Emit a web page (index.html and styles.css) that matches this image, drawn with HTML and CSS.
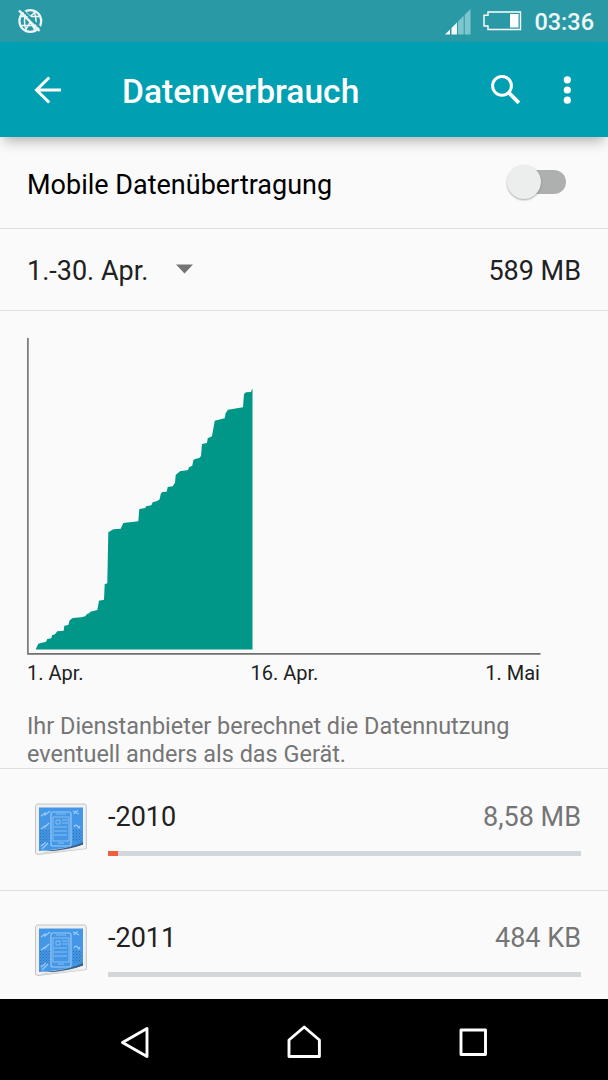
FILE: index.html
```html
<!DOCTYPE html>
<html lang="de">
<head>
    <meta charset="UTF-8">
    <meta name="viewport" content="width=device-width, initial-scale=1.0">
    <title>Datenverbrauch</title>
    <link rel="stylesheet" href="styles.css">
</head>
<body>

    <!-- Statusleiste -->
    <div class="status-bar">
        <svg class="globe-icon" width="26" height="26" viewBox="0 0 26 26" fill="none" stroke="#eef5f6">
            <circle cx="13.300" cy="13" r="10.900" stroke-width="2.200"/>
            <path d="M4 8.500h18M4 17.500h18M9.500 3Q5.500 13 9.500 23M17 3Q21 13 17 23M8.500 4L13.300 8.500L18 4M8.500 22L13.300 14L18 22" stroke-width="1.500"/>
            <path d="M5 1.500L25 21.500" stroke="#2a99a6" stroke-width="2"/>
            <path d="M2 2.500L22.500 23" stroke-width="2.400"/>
        </svg>
        <div class="status-right">
            <svg width="26" height="26" viewBox="0 0 26 26">
                <path d="M0 25.500L5 20.500V25.500z" fill="#f3f8f9"/>
                <path d="M6.500 19L12 13.500V25.500H6.500z" fill="#f3f8f9"/>
                <path d="M13 12.500L18.700 6.800V25.500H13z" fill="#7ec6cd"/>
                <path d="M19.700 5.800L25.500 0V25.500H19.700z" fill="#7ec6cd"/>
            </svg>
            <svg class="battery-icon" width="39" height="20" viewBox="0 0 39 20">
                <path d="M5 1H37.500V18.500H5V15H1V4.200H5z" fill="none" stroke="#fff" stroke-width="1.400"/>
                <path d="M27 3h8.500v13.500H27z" fill="#fff"/>
            </svg>
            <span class="clock">03:36</span>
        </div>
    </div>

    <!-- Titelleiste -->
    <div class="app-bar">
        <svg class="back-icon" width="28" height="28" viewBox="0 0 28 28" fill="none" stroke="#fff" stroke-width="3">
            <path d="M27 14H3M15.200 1.500L2.500 14L15.200 26.500"/>
        </svg>
        <h1>Datenverbrauch</h1>
        <svg class="search-icon" width="30" height="30" viewBox="0 0 30 30" fill="none" stroke="#fff">
            <circle cx="11" cy="10.800" r="9.400" stroke-width="3"/>
            <path d="M17.700 17.600L27.900 27.800" stroke-width="3.800"/>
        </svg>
        <svg width="8" height="28" viewBox="0 0 8 28" fill="#fff">
            <circle cx="4.300" cy="3.800" r="3.600"/>
            <circle cx="4.300" cy="14" r="3.600"/>
            <circle cx="4.300" cy="24.200" r="3.600"/>
        </svg>
    </div>

    <div class="content">
        <div class="row mobile-row">
            <span>Mobile Datenübertragung</span>
            <div class="switch"><div class="thumb"></div></div>
        </div>

        <div class="row cycle-row">
            <span>1.-30. Apr.</span>
            <svg class="caret" width="17" height="10" viewBox="0 0 17 10"><path d="M0 0.500H17L8.500 9.500z" fill="#747474"/></svg>
            <span class="total">589 MB</span>
        </div>

        <!-- Verbrauchsdiagramm -->
        <div class="chart">
            <svg width="514" height="318" viewBox="27 338 514 318">
                <path fill="#009688" d="M35.700 649.500L38.300 643.700L46 641.700L47.300 639L51.300 638.300L52 635.300L55 634.300L57.300 631.300L63.700 630.700L64.300 625.700L68.300 625L69.700 620.300L72.700 618L81.300 617.300L85.300 616.300L86.700 614.300L89.300 613.300L90.300 611.700L97.300 610L99 600.700L104 599.700L104.700 584.300L107.300 583.300L108.300 532.300L113.300 529.300L120.700 528.700L123.300 523L138.300 521.300L139.300 509L145.300 508L146 506.300L151.300 505.300L152.700 502.300L157.300 501L159.700 499.300L160.700 494L162.300 492L166.700 491.700L167.700 487L172.700 486.300L175 482.700L175.700 475L180 471.300L188 470L189 467.300L192.300 465.700L193.300 460.300L195 459L199.300 458L201 456L202 444L207 443L207.700 438.300L212 436.300L214.700 420.700L224.700 418.300L225.700 413L228 409.700L243 407.300L244 394L246 392.300L251 392L252 389H252.500V649.500z"/>
                <path d="M27.900 338V653.900H540.500" fill="none" stroke="#707070" stroke-width="1.600"/>
            </svg>
            <div class="chart-labels">
                <span>1. Apr.</span>
                <span>16. Apr.</span>
                <span>1. Mai</span>
            </div>
        </div>

        <p class="note">Ihr Dienstanbieter berechnet die Datennutzung<br>eventuell anders als das Gerät.</p>

        <!-- Apps -->
        <div class="app app-first">
            <svg class="app-icon" width="54" height="54" viewBox="0 0 54 54">
                <use href="#blueprint"/>
            </svg>
            <div class="app-info">
                <div class="app-text"><span>-2010</span><span class="size">8,58 MB</span></div>
                <div class="bar"><div class="bar-fill" style="width: 2.1%"></div></div>
            </div>
        </div>
        <div class="app">
            <svg class="app-icon" width="54" height="54" viewBox="0 0 54 54">
                <use href="#blueprint"/>
            </svg>
            <div class="app-info">
                <div class="app-text"><span>-2011</span><span class="size">484 KB</span></div>
                <div class="bar"></div>
            </div>
        </div>
    </div>

    <!-- Navigationsleiste -->
    <div class="nav-bar">
        <svg width="34" height="36" viewBox="0 0 34 36"><path d="M29 3.500V31.500L4.500 17.500z"/></svg>
        <svg width="34" height="36" viewBox="0 0 34 36"><path d="M2 31.500V15L17.200 2L32.400 15V31.500z"/></svg>
        <svg width="34" height="36" viewBox="0 0 34 36"><path d="M5 5H29.500V29.500H5z"/></svg>
    </div>

    <!-- Standard-App-Symbol -->
    <svg class="defs">
        <defs>
            <linearGradient id="curl" x1="0" y1="0" x2="0" y2="1">
                <stop offset="0" stop-color="#fff"/>
                <stop offset="1" stop-color="#d4d4d4"/>
            </linearGradient>
            <pattern id="dots" width="3" height="3" patternUnits="userSpaceOnUse">
                <path d="M0 0h1v1H0zM1.500 1.500h1v1h-1z" fill="#2b6fae"/>
            </pattern>
            <g id="blueprint">
                <path d="M3 1H51L52.300 2.500V45.500L4 51.500L1.500 50.500V2.500z" fill="#f0f0f0" stroke="#c4c4c4"/>
                <path d="M5 4.500H49V40Q38 45 5 48z" fill="#4397e6"/>
                <path d="M6 27h10v14H6zM39 27h9v12h-9z" fill="url(#dots)"/>
                <path d="M9 48Q34 46 49 39V42L30 48z" fill="#39658e"/>
                <path d="M11 48.500Q34 47.500 51.500 41V45.500L4 51.500z" fill="url(#curl)"/>
                <g fill="none" stroke="#9bc9f5">
                    <rect x="17" y="9" width="20" height="34" rx="2" stroke-width="1.200"/>
                    <path d="M19 14h16v24H19zM22 11h10M22 17h4v4h-4zM28 17h6M28 20h6M20 24h13M20 28h13M20 32h13M24 40h6" stroke-width=".8"/>
                    <path d="M7 13L11 10L11 12L16 8M7 26L11 23V24L15 20M8 46L14 40M7 43L12 39M39 8L45 11M40 11Q42 7 44 8M40 24Q42 20 45 25L46 23" stroke-width="1.300"/>
                </g>
            </g>
        </defs>
    </svg>

</body>
</html>
```
FILE: styles.css
```css
body {
    font-family: Roboto, "Liberation Sans", sans-serif;
    margin: 0;
    height: 1080px;
    background-color: #fafafa;
    color: #212121;
    font-size: 27px;
    display: flex;
    flex-direction: column;
    overflow: hidden;
}

svg {
    display: block;
    flex: none;
}

/* Statusleiste */
.status-bar {
    height: 42px;
    box-sizing: border-box;
    padding: 0 14px 0 17px;
    background-color: #2a99a6;
    display: flex;
    align-items: center;
    justify-content: space-between;
}

.status-right {
    display: flex;
    align-items: center;
    padding-top: 1px;
}

.battery-icon {
    margin: 0 12px 2px 12px;
}

.clock {
    color: #eef6f7;
    font-size: 23.5px;
    font-weight: 500;
    line-height: 38px;
}

/* Titelleiste */
.app-bar {
    position: relative;
    height: 95px;
    box-sizing: border-box;
    padding: 0 37px 0 34px;
    background-color: #009fb1;
    color: white;
    display: flex;
    align-items: center;
    box-shadow: 0 8px 12px -4px rgba(0, 0, 0, 0.3);
}

.app-bar h1 {
    flex: 1;
    margin: 5px 0 0 60px;
    font-size: 33.6px;
    font-weight: 500;
    line-height: 40px;
}

.search-icon {
    margin-right: 42px;
}

/* Inhalt */
.content {
    height: 862px;
    overflow: hidden;
}

.row {
    box-sizing: border-box;
    padding: 0 27px;
    display: flex;
    align-items: center;
    border-bottom: 1px solid #dfdfdf;
    white-space: nowrap;
}

.mobile-row {
    height: 92px;
    padding-top: 4px;
    padding-right: 42px;
    color: #000;
    justify-content: space-between;
}

.cycle-row {
    height: 82px;
    padding-top: 2px;
}

.caret {
    margin: 0 0 3px 28px;
}

.total {
    margin-left: auto;
}

/* Schalter */
.switch {
    width: 50px;
    height: 24px;
    margin-bottom: 5px;
    border-radius: 12px;
    background-color: #aeb0b0;
}

.thumb {
    width: 34px;
    height: 34px;
    margin: -5px 0 0 -9px;
    border-radius: 50%;
    background-color: #eceeee;
    box-shadow: 0 1px 2px rgba(60, 75, 85, 0.45);
}

/* Diagramm */
.chart {
    width: 514px;
    padding: 27px 0 0 27px;
}

.chart-labels {
    display: flex;
    justify-content: space-between;
    width: 513px;
    padding-top: 5px;
    font-size: 20px;
    line-height: 24px;
}

.note {
    height: 56px;
    margin: 0;
    padding: 27px 27px 0;
    border-bottom: 1px solid #dfdfdf;
    color: #757575;
    font-size: 23.45px;
    line-height: 28px;
}

/* App-Zeilen */
.app {
    height: 121px;
    box-sizing: border-box;
    padding: 0 27px 0 34px;
    display: flex;
}

.app-first {
    height: 122px;
    padding-top: 1px;
    border-bottom: 1px solid #dfdfdf;
}

.app-icon {
    margin: 33px 20px 0 0;
}

.app-info {
    flex: 1;
}

.app-text {
    display: flex;
    justify-content: space-between;
    padding-top: 30px;
    line-height: 34px;
}

.size {
    color: #757575;
}

.bar {
    height: 5px;
    margin-top: 17px;
    background-color: #d1d7da;
}

.bar-fill {
    height: 5px;
    background-color: #f0603c;
}

/* Navigationsleiste */
.nav-bar {
    height: 81px;
    flex: none;
    box-sizing: border-box;
    padding: 6px 118px 0;
    background-color: #000;
    display: flex;
    align-items: center;
    justify-content: space-between;
}

.nav-bar path {
    fill: none;
    stroke: #fff;
    stroke-width: 2.9;
    stroke-linejoin: round;
}

.defs {
    position: absolute;
    width: 0;
    height: 0;
}
```
